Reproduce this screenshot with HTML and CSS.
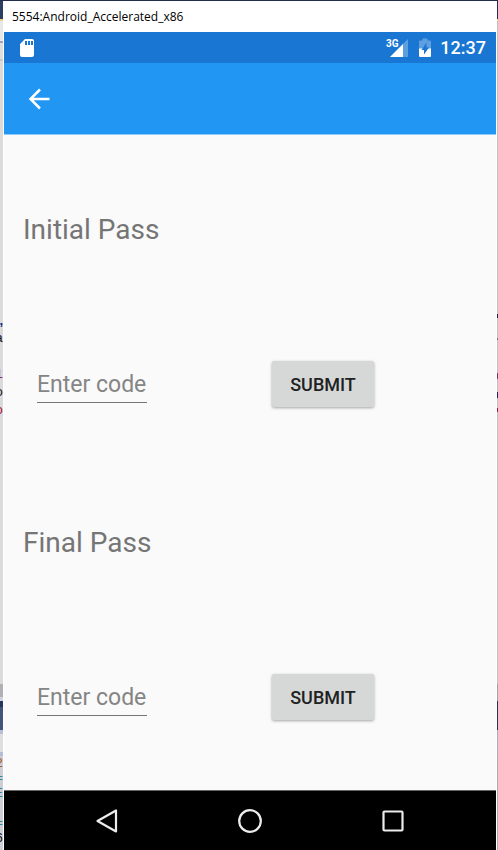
FILE: index.html
```html
<!DOCTYPE html>
<html lang="en">
<head>
<meta charset="utf-8">
<title>5554:Android_Accelerated_x86</title>
<meta name="viewport" content="width=device-width, initial-scale=1">
<link rel="stylesheet" href="styles.css">
</head>
<body>
<div class="desktop">
  <div class="edge edge-left" aria-hidden="true">
    <div class="code">
      <span class="navy">,</span>
      <span>a</span>
      <span></span>
      <span class="purple">l</span>
      <span>o</span>
      <span class="red">o</span>
    </div>
    <div class="code lower">
      <span class="orange">2</span>
      <span class="teal">=</span>
      <span class="teal">E</span>
      <span></span>
      <span class="teal">=</span>
      <span>6</span>
    </div>
  </div>
  <div class="window">
    <header class="titlebar">5554:Android_Accelerated_x86</header>
    <div class="screen">
      <div class="status">
        <svg class="sd" width="16" height="20" viewBox="0 0 16 20" aria-hidden="true"><path fill="#fff" fill-rule="evenodd" d="M6 1H13Q15 1 15 3V17Q15 19 13 19H3Q1 19 1 17V6ZM6 3V7H8V3ZM9 3V7H11V3ZM12 3V7H14V3Z"/></svg>
        <div class="indicators">
          <svg width="24" height="20" viewBox="0 0 24 20" role="img" aria-label="3G signal"><path fill="#5e9fe0" d="M23 1V19H5Z"/><path fill="#fff" d="M18 6V19H5Z"/><path class="halo" d="M0 0H13V10H0Z"/><text class="network" x="1" y="9">3G</text></svg>
          <svg class="battery" width="12" height="20" viewBox="0 0 12 20" role="img" aria-label="Battery charging"><path fill="#5e9fe0" d="M3.500 .5H8.500V2.500H11Q12 2.500 12 3.500V11H0V3.500Q0 2.500 1 2.500H3.500Z"/><path fill="#fff" d="M0 10.500H12V18Q12 19 11 19H1Q0 19 0 18Z"/><path fill="#1976d2" d="M7.500 4.500V9.500H10L5 16.500V12H2.500Z"/></svg>
          <span class="clock">12:37</span>
        </div>
      </div>
      <div class="toolbar">
        <button class="back" type="button" aria-label="Back"><svg width="22" height="22" viewBox="0 0 22 22" aria-hidden="true"><path fill="none" stroke="#fff" stroke-width="2.500" d="M21.500 11H3M12 1.500L2.500 11L12 20.500"/></svg></button>
      </div>
      <main>
        <section class="pass">
          <h2><label for="initial">Initial Pass</label></h2>
          <form class="entry">
            <input id="initial" type="text" placeholder="Enter code">
            <button class="submit" type="button">SUBMIT</button>
          </form>
        </section>
        <section class="pass">
          <h2><label for="final">Final Pass</label></h2>
          <form class="entry">
            <input id="final" type="text" placeholder="Enter code">
            <button class="submit" type="button">SUBMIT</button>
          </form>
        </section>
      </main>
      <nav class="navbar" aria-label="System">
        <button type="button" aria-label="Back"><svg width="26" height="26" viewBox="0 0 26 26" aria-hidden="true"><path d="M22 2.500V23.500L3.500 13Z"/></svg></button>
        <button type="button" aria-label="Home"><svg width="26" height="26" viewBox="0 0 26 26" aria-hidden="true"><circle cx="13" cy="13" r="10.800"/></svg></button>
        <button type="button" aria-label="Overview"><svg width="26" height="26" viewBox="0 0 26 26" aria-hidden="true"><rect x="3.500" y="3.500" width="19" height="19" rx="1"/></svg></button>
      </nav>
    </div>
  </div>
  <div class="edge edge-right" aria-hidden="true"></div>
</div>
</body>
</html>
```
FILE: styles.css
```css
* {
  box-sizing: border-box;
}

body {
  margin: 0;
  font-family: Roboto, "Liberation Sans", sans-serif;
}

button {
  border: 0;
  padding: 0;
  background: none;
  font: inherit;
}

svg {
  display: block;
}

.desktop {
  display: grid;
  grid-template-columns: 3px minmax(0, 1fr) 1px;
  min-height: 100vh;
  padding-top: 1px;
  background: #222d4b;
}

/* Slivers of the editor behind the emulator window */
.edge {
  overflow: hidden;
}

.edge-left {
  padding-top: 311px;
  background: linear-gradient(#2c3e62 0 18px, #e8d58a 18px 20px, #e8e8e8 20px 40px, #9aa5bd 40px 42px, #dedede 42px 58px, #c8c8c8 58px 60px, #dadada 60px 683px, #b0b0b5 683px 696px, #d0d3dd 696px 700px, #24365c 700px 706px, #43547a 706px 729px, #b9c0d4 729px 733px, #dedede 733px 751px, #b3bdd5 751px 755px, #cdcfd4 755px);
}

.edge-right {
  background: linear-gradient(#222d4b 0 18px, #e8d58a 18px 20px, #c0c0c0 20px 313px, #1e1e46 313px 317px, #c0c0c0 317px 337px, #80608c 337px 339px, #c0c0c0 339px 372px, #863068 372px 378px, #c0c0c0 378px 391px, #202060 391px 397px, #c0c0c0 397px 407px, #8b2045 407px 411px, #c0c0c0 411px 683px, #a0a0a5 683px 700px, #26344f 700px 729px, #a8adb8 729px 755px, #aaa 755px);
}

.code {
  display: flex;
  flex-direction: column;
  align-items: flex-end;
  color: #111;
  font: 13px/18px "Liberation Mono", monospace;
}

.code span {
  height: 18px;
}

.lower {
  padding-top: 336px;
  line-height: 15px;
}

.lower span {
  height: 15px;
}

.navy {
  color: #103080;
  font-family: "Liberation Sans", sans-serif;
  font-weight: 700;
}

.purple { color: #942080; }
.red { color: #a01535; }
.orange { color: #a06020; }
.teal { color: #308a95; }

.window {
  display: flex;
  flex-direction: column;
  padding: 0 1px;
  background: #fff;
}

.titlebar {
  height: 31px;
  padding: 0 8px;
  color: #000;
  font: 12px/31px "Open Sans", "Noto Sans", sans-serif;
}

.screen {
  display: flex;
  flex: 1;
  flex-direction: column;
  background: #fafafa;
}

.status {
  display: flex;
  align-items: center;
  justify-content: space-between;
  height: 31px;
  padding: 0 10px 0 15px;
  background: #1976d2;
}

.indicators {
  display: flex;
  align-items: center;
}

.halo {
  fill: #1976d2;
}

.network {
  fill: #fff;
  font: 700 10px "Roboto", sans-serif;
}

.battery {
  margin: 0 9px 0 10px;
}

.clock {
  color: #fff;
  font-size: 18px;
  font-weight: 500;
  line-height: 31px;
}

.toolbar {
  display: flex;
  align-items: center;
  height: 72px;
  padding: 0 24px;
  border-bottom: 1px solid #90caf9;
  background: #2196f3;
}

main {
  flex: 1;
}

.pass h2 {
  margin: 0;
  padding: 0 19px;
  color: #757575;
  font-size: 28px;
  font-weight: 400;
  line-height: 189px;
}

.entry {
  display: grid;
  grid-template-columns: 110px 102px;
  column-gap: 125px;
  align-items: start;
  height: 124px;
  padding: 37px 33px 0;
}

.entry input {
  width: 100%;
  height: 42px;
  padding: 6px 0 0;
  border: 0;
  border-bottom: 1px solid #757575;
  border-radius: 0;
  background: none;
  color: #212121;
  font: 23px/35px Roboto, sans-serif;
  outline: 0;
}

.entry input::placeholder {
  color: #858585;
  opacity: 1;
}

.submit {
  height: 46px;
  border-radius: 2px;
  background: #d6d8d7;
  box-shadow: 0 1px 3px rgba(0, 0, 0, 0.35);
  color: #212121;
  font-size: 18px;
  font-weight: 500;
}

.navbar {
  display: grid;
  grid-template-columns: repeat(3, 143px);
  align-items: center;
  justify-content: center;
  height: 60px;
  border-top: 1px solid #666;
  background: #000;
}

.navbar button {
  display: grid;
  place-items: center;
}

.navbar svg {
  fill: none;
  stroke: #ececec;
  stroke-width: 2.2;
  stroke-linejoin: round;
}
```
